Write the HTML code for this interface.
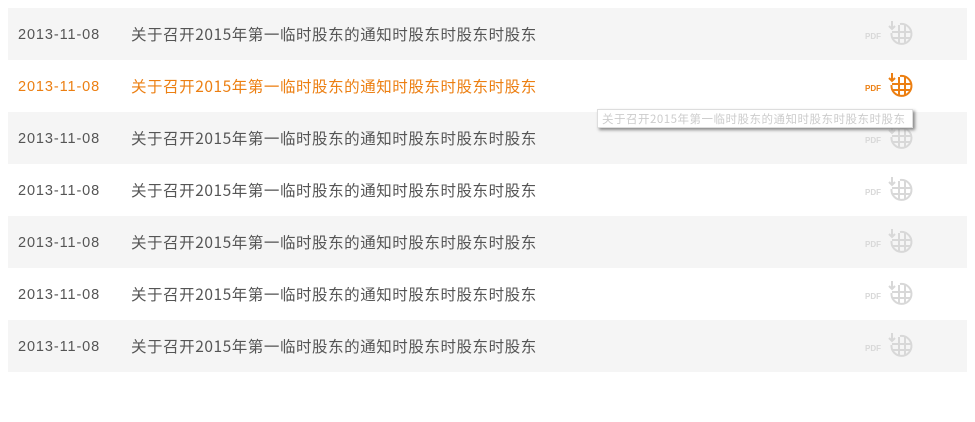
<!DOCTYPE html>
<html><head><meta charset="utf-8"><style>
body{margin:0;background:#fff;font-family:"Liberation Sans","Noto Sans CJK SC",sans-serif;}
.list{position:absolute;left:8px;top:8px;width:959px;}
.row{height:52px;position:relative;color:#555;font-size:15px;}
.row:nth-child(odd){background:#f5f5f5;}
.d{position:absolute;left:10px;top:19px;font-size:14.5px;letter-spacing:0.9px;}
.t{position:absolute;left:123px;top:15px;font-family:"Noto Sans CJK SC",sans-serif;font-size:15.5px;line-height:22px;letter-spacing:0.55px;}
.pdf{position:absolute;left:857px;top:24px;font-size:8px;font-weight:bold;color:#d8d8d8;}
.ic{position:absolute;left:880px;top:13px;}
.row.on{color:#ec7f12;}
.row.on .pdf{color:#ec7f12;}
.tip{position:absolute;left:597px;top:109px;width:316px;height:19px;border:1px solid #ddd;background:#fff;box-shadow:2px 2px 3px #888;font-family:"Noto Sans CJK SC",sans-serif;font-size:11.5px;color:#ccc;line-height:18px;padding-left:4px;box-sizing:border-box;white-space:nowrap;overflow:hidden;letter-spacing:0.5px;}
</style></head><body>
<div class="list">
<div class="row"><span class="d">2013-11-08</span><span class="t">关于召开2015年第一临时股东的通知时股东时股东时股东</span><span class="pdf">PDF</span><svg class="ic" width="26" height="26" fill="none" stroke="#d8d8d8" stroke-width="2"><path d="M3.5 12 A10 10 0 1 0 12 3"/><path d="M4 0V8M1 5l3 3 3-3"/><path d="M11 4V23M17 4V22M4 11H23M4 17H22"/></svg></div>
<div class="row on"><span class="d">2013-11-08</span><span class="t">关于召开2015年第一临时股东的通知时股东时股东时股东</span><span class="pdf">PDF</span><svg class="ic" width="26" height="26" fill="none" stroke="#ec7f12" stroke-width="2"><path d="M3.5 12 A10 10 0 1 0 12 3"/><path d="M4 0V8M1 5l3 3 3-3"/><path d="M11 4V23M17 4V22M4 11H23M4 17H22"/></svg></div>
<div class="row"><span class="d">2013-11-08</span><span class="t">关于召开2015年第一临时股东的通知时股东时股东时股东</span><span class="pdf">PDF</span><svg class="ic" width="26" height="26" fill="none" stroke="#d8d8d8" stroke-width="2"><path d="M3.5 12 A10 10 0 1 0 12 3"/><path d="M4 0V8M1 5l3 3 3-3"/><path d="M11 4V23M17 4V22M4 11H23M4 17H22"/></svg></div>
<div class="row"><span class="d">2013-11-08</span><span class="t">关于召开2015年第一临时股东的通知时股东时股东时股东</span><span class="pdf">PDF</span><svg class="ic" width="26" height="26" fill="none" stroke="#d8d8d8" stroke-width="2"><path d="M3.5 12 A10 10 0 1 0 12 3"/><path d="M4 0V8M1 5l3 3 3-3"/><path d="M11 4V23M17 4V22M4 11H23M4 17H22"/></svg></div>
<div class="row"><span class="d">2013-11-08</span><span class="t">关于召开2015年第一临时股东的通知时股东时股东时股东</span><span class="pdf">PDF</span><svg class="ic" width="26" height="26" fill="none" stroke="#d8d8d8" stroke-width="2"><path d="M3.5 12 A10 10 0 1 0 12 3"/><path d="M4 0V8M1 5l3 3 3-3"/><path d="M11 4V23M17 4V22M4 11H23M4 17H22"/></svg></div>
<div class="row"><span class="d">2013-11-08</span><span class="t">关于召开2015年第一临时股东的通知时股东时股东时股东</span><span class="pdf">PDF</span><svg class="ic" width="26" height="26" fill="none" stroke="#d8d8d8" stroke-width="2"><path d="M3.5 12 A10 10 0 1 0 12 3"/><path d="M4 0V8M1 5l3 3 3-3"/><path d="M11 4V23M17 4V22M4 11H23M4 17H22"/></svg></div>
<div class="row"><span class="d">2013-11-08</span><span class="t">关于召开2015年第一临时股东的通知时股东时股东时股东</span><span class="pdf">PDF</span><svg class="ic" width="26" height="26" fill="none" stroke="#d8d8d8" stroke-width="2"><path d="M3.5 12 A10 10 0 1 0 12 3"/><path d="M4 0V8M1 5l3 3 3-3"/><path d="M11 4V23M17 4V22M4 11H23M4 17H22"/></svg></div>
</div>
<div class="tip">关于召开2015年第一临时股东的通知时股东时股东时股东</div>
</body></html>
